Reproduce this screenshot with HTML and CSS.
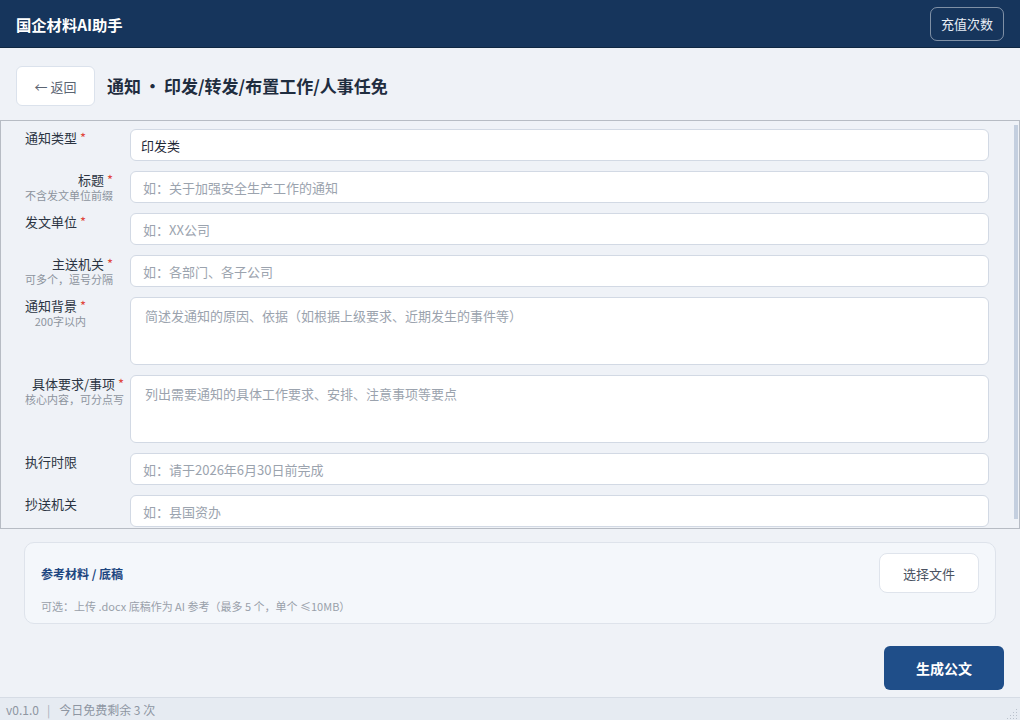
FILE: index.html
```html
<!DOCTYPE html>
<html lang="zh-CN">
<head>
<meta charset="UTF-8">
<meta name="viewport" content="width=device-width, initial-scale=1.0">
<title>国企材料AI助手</title>
<link rel="stylesheet" href="styles.css">
</head>
<body>
    <header class="topbar">
        <div class="brand">国企材料AI助手</div>
        <button type="button" class="recharge">充值次数</button>
    </header>

    <div class="title-row">
        <button type="button" class="back-btn">← 返回</button>
        <h1 class="page-title">通知<span class="dot">・</span>印发/转发/布置工作/人事任免</h1>
    </div>

    <div class="scroll-box">
        <form class="form-grid" id="notice-form">
            <div class="field-label"><span class="lbl">通知类型 <i>*</i></span></div>
            <select class="control select" name="type">
                <option>印发类</option>
                <option>转发类</option>
                <option>布置工作类</option>
                <option>人事任免类</option>
            </select>

            <div class="field-label"><span class="lbl">标题 <i>*</i><small>不含发文单位前缀</small></span></div>
            <input class="control" type="text" name="title" placeholder="如：关于加强安全生产工作的通知">

            <div class="field-label"><span class="lbl">发文单位 <i>*</i></span></div>
            <input class="control" type="text" name="issuer" placeholder="如：XX公司">

            <div class="field-label"><span class="lbl">主送机关 <i>*</i><small>可多个，逗号分隔</small></span></div>
            <input class="control" type="text" name="to" placeholder="如：各部门、各子公司">

            <div class="field-label"><span class="lbl">通知背景 <i>*</i><small>200字以内</small></span></div>
            <textarea class="control area" name="background" placeholder="简述发通知的原因、依据（如根据上级要求、近期发生的事件等）"></textarea>

            <div class="field-label"><span class="lbl">具体要求/事项 <i>*</i><small>核心内容，可分点写</small></span></div>
            <textarea class="control area" name="items" placeholder="列出需要通知的具体工作要求、安排、注意事项等要点"></textarea>

            <div class="field-label"><span class="lbl">执行时限</span></div>
            <input class="control" type="text" name="deadline" placeholder="如：请于2026年6月30日前完成">

            <div class="field-label"><span class="lbl">抄送机关</span></div>
            <input class="control" type="text" name="cc" placeholder="如：县国资办">
        </form>
        <div class="scroll-track"><div class="scroll-thumb"></div></div>
    </div>

    <div class="ref-card">
        <div class="ref-text">
            <div class="ref-title">参考材料 / 底稿</div>
            <div class="ref-hint">可选：上传 .docx 底稿作为 AI 参考（最多 5 个，单个 ≤10MB）</div>
        </div>
        <button type="button" class="file-btn">选择文件</button>
    </div>

    <div class="action-row">
        <button type="submit" form="notice-form" class="generate">生成公文</button>
    </div>

    <footer class="statusbar">
        <span class="status-text">v0.1.0<span class="sep">|</span>今日免费剩余 3 次</span>
        <svg class="grip" width="12" height="12" viewBox="0 0 12 12">
            <g fill="#b9c1cc">
                <rect x="10" y="2" width="1" height="1"/>
                <rect x="7" y="5" width="1" height="1"/>
                <rect x="10" y="5" width="1" height="1"/>
                <rect x="4" y="8" width="1" height="1"/>
                <rect x="7" y="8" width="1" height="1"/>
                <rect x="10" y="8" width="1" height="1"/>
                <rect x="1" y="11" width="1" height="1"/>
                <rect x="4" y="11" width="1" height="1"/>
                <rect x="7" y="11" width="1" height="1"/>
                <rect x="10" y="11" width="1" height="1"/>
            </g>
        </svg>
    </footer>
</body>
</html>
```

FILE: styles.css
```css
* {
    box-sizing: border-box;
}
body {
    margin: 0;
    width: 1020px;
    height: 720px;
    overflow: hidden;
    background: #eff2f7;
    font-family: "Noto Sans CJK SC", "Noto Sans", "Liberation Sans", sans-serif;
    color: #1f2937;
    display: flex;
    flex-direction: column;
}
button {
    font-family: inherit;
    cursor: pointer;
}

/* top bar */
.topbar {
    height: 48px;
    flex: none;
    background: #16355c;
    border-bottom: 1px solid #0f2742;
    display: flex;
    align-items: center;
    justify-content: space-between;
    padding: 0 16px;
}
.brand {
    color: #ffffff;
    font-size: 15.3px;
    font-weight: 700;
    line-height: 20px;
}
.recharge {
    height: 34px;
    padding: 0 10px;
    background: transparent;
    color: #e8eef6;
    border: 1px solid rgba(255, 255, 255, 0.45);
    border-radius: 7px;
    font-size: 13px;
}

/* title row */
.title-row {
    flex: none;
    display: flex;
    align-items: flex-start;
    gap: 12px;
    padding: 18px 16px 0;
    height: 72px;
}
.back-btn {
    width: 79px;
    height: 40px;
    background: #ffffff;
    border: 1px solid #dbe2ec;
    border-radius: 6px;
    color: #5b6472;
    font-size: 13px;
}
.page-title {
    margin: 0;
    font-size: 17px;
    line-height: 40px;
    font-weight: 700;
    color: #1f2d3f;
}
.dot {
    margin: 0 3px;
}

/* scrolling form */
.scroll-box {
    flex: none;
    height: 409px;
    border: 1px solid #b7bcc4;
    display: flex;
    overflow: hidden;
}
.form-grid {
    flex: 1;
    display: grid;
    grid-template-columns: 105px 1fr;
    row-gap: 10px;
    padding: 8px 21px 0 24px;
    align-content: start;
}
.lbl {
    display: block;
    width: fit-content;
    text-align: right;
    font-size: 13px;
    line-height: 17px;
    color: #2b3442;
}
.lbl i {
    font-style: normal;
    color: #e0463c;
}
.lbl small {
    display: block;
    font-size: 11px;
    line-height: 14px;
    color: #8d949e;
}
.control {
    height: 32px;
    width: 100%;
    background: #ffffff;
    border: 1px solid #d2d9e4;
    border-radius: 6px;
    padding: 0 12px;
    font-family: inherit;
    font-size: 13px;
    color: #1f2937;
    outline: none;
}
.control::placeholder {
    color: #9ba3ae;
}
.select {
    appearance: none;
    -webkit-appearance: none;
    padding: 0 10px;
}
.area {
    height: 68px;
    padding: 8px 14px;
    line-height: 20px;
    resize: none;
}
.scroll-track {
    width: 9px;
    flex: none;
    padding: 4px 1px 9px 4px;
}
.scroll-thumb {
    height: 100%;
    width: 4px;
    background: #c4cfdf;
}

/* reference material card */
.ref-card {
    flex: none;
    margin: 13px 24px 0;
    height: 82px;
    background: #f4f7fb;
    border: 1px solid #dee3eb;
    border-radius: 10px;
    display: flex;
    justify-content: space-between;
    align-items: flex-start;
    padding: 10px 16px 0 16px;
}
.ref-title {
    margin-top: 12px;
    font-size: 12px;
    line-height: 18px;
    font-weight: 700;
    color: #1d4680;
}
.ref-hint {
    margin-top: 16px;
    font-size: 11px;
    line-height: 14px;
    color: #99a0aa;
}
.file-btn {
    width: 100px;
    height: 40px;
    background: #ffffff;
    border: 1px solid #dfe4ec;
    border-radius: 8px;
    color: #4a5261;
    font-size: 13px;
}

/* bottom action */
.action-row {
    flex: 1;
    display: flex;
    justify-content: flex-end;
    align-items: flex-start;
    padding: 22px 16px 0;
}
.generate {
    width: 120px;
    height: 44px;
    background: #1f4e89;
    color: #ffffff;
    border: none;
    border-radius: 6px;
    font-size: 14px;
    font-weight: 700;
}

/* status bar */
.statusbar {
    flex: none;
    height: 23px;
    background: #e6ebf2;
    border-top: 1px solid #d6dce5;
    display: flex;
    align-items: center;
    justify-content: space-between;
    padding: 0 2px 0 6px;
    font-size: 12px;
    color: #8e96a2;
}
.sep {
    margin: 0 9px 0 8px;
    color: #a9b0ba;
}
.grip {
    align-self: flex-end;
    margin-bottom: 1px;
}
```
